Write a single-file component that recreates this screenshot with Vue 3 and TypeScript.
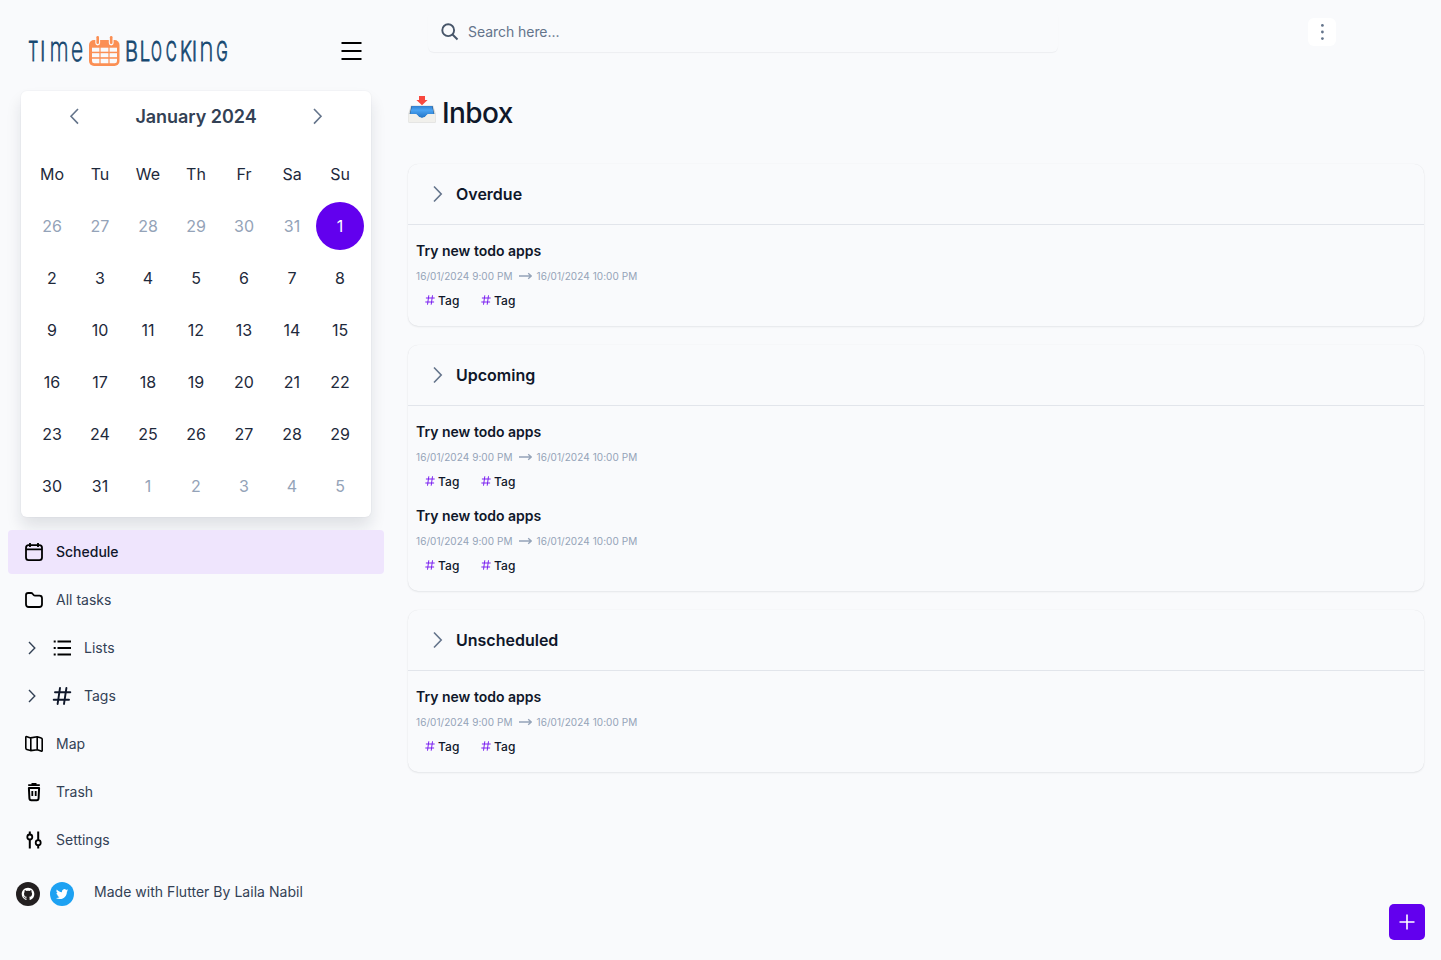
<script setup lang="ts">
interface Letter { c: string; x: number; sx: number; tall?: boolean }
interface Day { n: number; muted: boolean; selected: boolean }
interface Section { title: string; tasks: number }

const timeLetters: Letter[] = [
  { c: 'T', x: 33.3, sx: 0.58 },
  { c: 'I', x: 42.8, sx: 0.7 },
  { c: 'm', x: 59, sx: 0.63, tall: true },
  { c: 'e', x: 77, sx: 0.6, tall: true },
]
const blockingLetters: Letter[] = [
  { c: 'B', x: 131.4, sx: 0.74 },
  { c: 'L', x: 145, sx: 0.68 },
  { c: 'O', x: 156.5, sx: 0.53 },
  { c: 'C', x: 171.2, sx: 0.56 },
  { c: 'K', x: 186, sx: 0.68 },
  { c: 'I', x: 194.5, sx: 0.7 },
  { c: 'n', x: 206.5, sx: 0.7, tall: true },
  { c: 'G', x: 222, sx: 0.57 },
]

const weekdays = ['Mo', 'Tu', 'We', 'Th', 'Fr', 'Sa', 'Su']
const days: Day[] = Array.from({ length: 42 }, (_, i) => {
  if (i < 6) return { n: 26 + i, muted: true, selected: false }
  if (i < 37) return { n: i - 5, muted: false, selected: i === 6 }
  return { n: i - 36, muted: true, selected: false }
})

const sections: Section[] = [
  { title: 'Overdue', tasks: 1 },
  { title: 'Upcoming', tasks: 2 },
  { title: 'Unscheduled', tasks: 1 },
]
const tags = ['Tag', 'Tag']
</script>

<template>
  <div class="app">
    <aside class="sidebar">
      <header class="brand">
        <svg class="logo" width="240" height="80" viewBox="0 0 240 80">
          <g class="word">
            <text
              v-for="(l, i) in timeLetters" :key="'t' + i"
              :class="{ tall: l.tall }"
              :transform="`translate(${l.x} 60.6) scale(${l.sx} 1)`"
            >{{ l.c }}</text>
            <text
              v-for="(l, i) in blockingLetters" :key="'b' + i"
              :class="{ tall: l.tall }"
              :transform="`translate(${l.x} 60.6) scale(${l.sx} 1)`"
            >{{ l.c }}</text>
          </g>
          <rect x="89" y="40" width="30.5" height="26" rx="5" fill="#fb8f54" />
          <g fill="#f9fafc">
            <rect x="95.3" y="37" width="4.8" height="8.4" rx="2.4" />
            <rect x="108.8" y="37" width="4.8" height="8.4" rx="2.4" />
            <rect x="92" y="47.7" width="7.4" height="4" />
            <rect x="100.6" y="47.7" width="7.8" height="4" />
            <rect x="109.6" y="47.7" width="7.4" height="4" />
            <rect x="92" y="53.2" width="7.4" height="4" />
            <rect x="100.6" y="53.2" width="7.8" height="4" />
            <rect x="109.6" y="53.2" width="7.4" height="4" />
            <path d="M92 58.7h7.4v4.6h-5q-2.4 0-2.4-2.4zM100.6 58.7h7.8v4.6h-7.8zM109.6 58.7h7.4v2.2q0 2.4-2.4 2.4h-5z" />
          </g>
          <g fill="#fb8f54">
            <rect x="96.4" y="36" width="2.6" height="8" rx="1.2" />
            <rect x="109.9" y="36" width="2.6" height="8" rx="1.2" />
          </g>
        </svg>
        <svg class="burger" width="22" height="20" viewBox="0 0 22 20">
          <path d="M1.500 2h20M1.500 10h20M1.500 18h20" stroke="#000" stroke-width="2" />
        </svg>
      </header>

      <section class="calendar">
        <div class="month">
          <svg width="10" height="18" viewBox="0 0 10 18"><path d="M9 1 2 8.300l7 7.300" /></svg>
          <h2>January 2024</h2>
          <svg width="10" height="18" viewBox="0 0 10 18"><path d="M1 1l7 7.300-7 7.300" /></svg>
        </div>
        <div class="grid">
          <span v-for="w in weekdays" :key="w" class="cell weekday">{{ w }}</span>
          <span
            v-for="(d, i) in days" :key="i"
            class="cell" :class="{ muted: d.muted, selected: d.selected }"
          >{{ d.n }}</span>
        </div>
      </section>

      <nav class="nav">
        <a class="item active">
          <svg class="icon" viewBox="0 0 20 20"><rect x="2" y="3.200" width="16" height="15" rx="2.600" /><path d="M2 7.300h16M6 1v4M14 1v4" /></svg>
          <span>Schedule</span>
        </a>
        <a class="item">
          <svg class="icon" viewBox="0 0 20 20"><path d="M2 5.200Q2 3 4.200 3H7q1 0 1.600.8l1 1.200q.6.700 1.500.700h4.400Q18 5.700 18 8.200v6Q18 17 15.200 17H4.800Q2 17 2 14.200z" /></svg>
          <span>All tasks</span>
        </a>
        <a class="item nested">
          <svg class="caret" width="8" height="14" viewBox="0 0 8 14"><path d="m1 1 5.800 6L1 13" /></svg>
          <svg class="icon" viewBox="0 0 20 20"><path d="M5.500 3.500H19M5.500 10H19M5.500 16.500H19M1.700 3.500h2M1.700 10h2M1.700 16.500h2" stroke-width="2" /></svg>
          <span>Lists</span>
        </a>
        <a class="item nested">
          <svg class="caret" width="8" height="14" viewBox="0 0 8 14"><path d="m1 1 5.800 6L1 13" /></svg>
          <svg class="icon dark" viewBox="0 0 20 20"><path d="M3 6.200h15.300M1.700 13.800H17M8 2 5.600 18M14.400 2 12 18" stroke-width="1.900" stroke-linecap="round" /></svg>
          <span>Tags</span>
        </a>
        <a class="item">
          <svg class="icon" viewBox="0 0 20 20"><path d="M1.800 3.600q0-1.300 1.200-.9l3.600 1.200 6.600-1.200 4 1.300q1 .3 1 1.300v10.900q0 1.300-1.200.9l-3.600-1.300-6.800.8-3.800-1.100q-1-.3-1-1.400zM6.800 4v12.600M13.200 2.800v13" stroke-width="1.600" stroke-linejoin="round" /></svg>
          <span>Map</span>
        </a>
        <a class="item">
          <svg class="icon" viewBox="0 0 20 20"><path d="M4.200 3.100h11.600M7.500 1.900h5M8.300 9v5M11.700 9v5" /><path d="m4.900 6 .5 10.200q.1 2 1.900 2h5.400q1.800 0 1.900-2L15.100 6z" stroke-width="2" stroke-linejoin="round" /></svg>
          <span>Trash</span>
        </a>
        <a class="item">
          <svg class="icon" viewBox="0 0 20 20"><path d="M5.800 1.500v3M5.800 9.500v9M14.200 1.500v8.700M14.200 15.300v3.200" stroke-width="2" /><circle cx="5.800" cy="7" r="2.500" /><circle cx="14.200" cy="12.700" r="2.500" /></svg>
          <span>Settings</span>
        </a>
      </nav>

      <footer class="credits">
        <svg width="24" height="24" viewBox="0 0 24 24">
          <circle cx="12" cy="12" r="12" fill="#231f20" />
          <path fill="#fff" transform="translate(5.700 5.700) scale(.79)" d="M8 0C3.580 0 0 3.580 0 8c0 3.540 2.290 6.530 5.470 7.590.4.070.55-.17.55-.38v-1.490c-2.010.37-2.530-.49-2.690-.94-.09-.23-.48-.94-.82-1.130-.28-.15-.68-.52-.01-.53.63-.01 1.080.58 1.230.82.720 1.210 1.870.87 2.330.66.070-.52.280-.87.510-1.070-1.780-.2-3.640-.89-3.640-3.950 0-.87.310-1.590.82-2.150-.08-.2-.36-1.020.08-2.120 0 0 .67-.21 2.200.82a7.400 7.400 0 0 1 4 0c1.530-1.040 2.200-.82 2.200-.82.440 1.100.16 1.920.08 2.120.51.560.82 1.270.82 2.150 0 3.070-1.870 3.750-3.650 3.950.29.250.54.730.54 1.480v2.200c0 .21.150.46.550.38A8.010 8.010 0 0 0 16 8c0-4.420-3.580-8-8-8z" />
        </svg>
        <svg width="24" height="24" viewBox="0 0 24 24">
          <circle cx="12" cy="12" r="12" fill="#1da1f2" />
          <path fill="#fff" transform="translate(5.900 6) scale(.51)" d="M23.950 4.570a10 10 0 0 1-2.820.77 4.960 4.960 0 0 0 2.160-2.720c-.95.550-2 .95-3.130 1.180a4.920 4.920 0 0 0-8.380 4.480C7.690 8.090 4.070 6.130 1.640 3.160a4.920 4.920 0 0 0 1.520 6.570 4.900 4.900 0 0 1-2.230-.61v.06a4.920 4.920 0 0 0 3.950 4.830 5 5 0 0 1-2.210.08 4.940 4.940 0 0 0 4.600 3.420A9.870 9.870 0 0 1 0 19.540a13.990 13.990 0 0 0 7.550 2.210c9.050 0 14-7.500 14-13.980 0-.21 0-.42-.02-.63a9.940 9.940 0 0 0 2.460-2.550z" />
        </svg>
        <span>Made with Flutter By Laila Nabil</span>
      </footer>
    </aside>

    <main class="main">
      <div class="topbar">
        <div class="search">
          <svg width="18" height="18" viewBox="0 0 18 18"><circle cx="7.200" cy="7.200" r="5.900" /><path d="m11.500 11.500 5 5" /></svg>
          <span>Search here...</span>
        </div>
        <button class="more" aria-label="More">
          <svg width="4" height="18" viewBox="0 0 4 18"><circle cx="2.400" cy="2.400" r="1.400" /><circle cx="2.400" cy="9" r="1.400" /><circle cx="2.400" cy="15.600" r="1.400" /></svg>
        </button>
      </div>

      <h1 class="title">
        <svg width="28" height="28" viewBox="0 0 28 28">
          <defs>
            <linearGradient id="tray" x1="0" y1="0" x2="0" y2="1">
              <stop offset="0" stop-color="#2f7fd0" /><stop offset=".35" stop-color="#4aa3f3" /><stop offset="1" stop-color="#2273c4" />
            </linearGradient>
          </defs>
          <path d="M2.800 10.500h22.400l2.700 8.500v7.700q0 1-1 1H1.200q-1 0-1-1V19z" fill="#d9dad9" />
          <path d="M3.400 11h21.200l1.700 8H1.700z" fill="#24588d" />
          <path d="M4 11h20l1.800 8h-5q-1.200 0-2 .9Q17 23 14 23t-4.800-3.100q-.8-.9-2-.9h-5z" fill="url(#tray)" />
          <path d="M.5 19h6.700q1.200 0 2 .9Q11 23 14 23t4.800-3.100q.8-.9 2-.9h6.700v7.500q0 .8-.8.8H1.300q-.8 0-.8-.8z" fill="#f1f0ec" />
          <path d="M11 1h6v4h2.600L14 10.300 8.400 5H11z" fill="#f8483f" />
        </svg>
        <span>Inbox</span>
      </h1>

      <div class="sections">
        <section v-for="s in sections" :key="s.title" class="card">
          <header class="card-head">
            <svg width="10" height="18" viewBox="0 0 10 18"><path d="M1 1.500 8.200 9 1 16.500" /></svg>
            <h3>{{ s.title }}</h3>
          </header>
          <div class="tasks">
            <article v-for="t in s.tasks" :key="t" class="task">
              <h4>Try new todo apps</h4>
              <div class="time">
                <span class="from">16/01/2024 9:00 PM</span>
                <svg width="13" height="8" viewBox="0 0 13 8"><path d="M0 4h12M9.200 1.200 12.200 4 9.200 6.800" /></svg>
                <span class="to">16/01/2024 10:00 PM</span>
              </div>
              <div class="tags">
                <span v-for="(tag, i) in tags" :key="i" class="tag">
                  <svg width="10" height="10" viewBox="0 0 10 10"><path d="M.900 3h8.800M.300 7h8.800M3.800.300 2.500 9.700M7.500.300 6.200 9.700" /></svg>
                  <span>{{ tag }}</span>
                </span>
              </div>
            </article>
          </div>
        </section>
      </div>
    </main>

    <button class="fab" aria-label="Add">
      <svg width="16" height="16" viewBox="0 0 16 16"><path d="M8 .500v15M.500 8h15" /></svg>
    </button>
  </div>
</template>

<style>
body { background: #f9fafc; }
</style>

<style scoped>
* { box-sizing: border-box; }
.app {
  display: flex;
  height: 960px;
  overflow: hidden;
  background: #f9fafc;
  font-family: Inter, "Liberation Sans", sans-serif;
  color: #0f172a;
}
h1, h2, h3, h4 { margin: 0; }
svg { display: block; flex: none; }
button { border: 0; padding: 0; display: flex; align-items: center; justify-content: center; }

.sidebar { width: 392px; flex: none; }
.brand { display: flex; height: 91px; }
.burger { margin: 41px 0 0 100px; }
.word text {
  font-size: 27px;
  font-weight: 300;
  text-anchor: middle;
  fill: #164870;
  stroke: #164870;
  stroke-width: .7px;
  vector-effect: non-scaling-stroke;
}
.word .tall { font-size: 35px; font-weight: 200; }

.calendar {
  width: 350px;
  height: 426px;
  margin-left: 21px;
  border-radius: 6px;
  background: #fff;
  box-shadow: 0 0 0 1px rgba(15, 23, 42, .02), 0 10px 16px rgba(15, 23, 42, .11);
}
.month { display: flex; align-items: center; justify-content: space-between; height: 51px; padding: 0 48px; }
.month svg, .card-head svg { fill: none; stroke: #64748b; stroke-width: 1.6; }
.month h2 { font-size: 18px; line-height: 24px; font-weight: 600; color: #334155; letter-spacing: -.04px; }
.grid { display: grid; grid-template-columns: repeat(7, 48px); row-gap: 4px; padding: 8px 0 0 7px; }
.cell { height: 48px; display: flex; align-items: center; justify-content: center; font-size: 16px; color: #1e293b; }
.muted { color: #94a3b8; }
.selected { background: #6200ee; color: #fff; border-radius: 50%; }

.nav { display: flex; flex-direction: column; gap: 4px; padding: 13px 8px 0; }
.item {
  display: flex;
  align-items: center;
  height: 44px;
  padding-left: 16px;
  border-radius: 4px;
  font-size: 14px;
  color: #334155;
}
.item span { margin: -1px 0 1px 12px; }
.item.active { background: #efe5fd; color: #0f172a; font-weight: 500; }
.icon { width: 20px; height: 20px; fill: none; stroke: #000; stroke-width: 1.8; }
.icon.dark { stroke: #0f172a; }
.nested { padding-left: 20px; }
.caret { margin-right: 16px; fill: none; stroke: #334155; stroke-width: 1.4; }

.credits { display: flex; align-items: center; gap: 10px; height: 24px; margin: 20px 0 0 16px; font-size: 14px; color: #334155; }
.credits span { margin: -5px 0 0 10px; letter-spacing: .03px; }

.main { flex: 1; padding: 11px 17px 0 16px; }
.topbar { display: flex; align-items: flex-start; justify-content: space-between; padding: 0 88px 0 20px; }
.search {
  display: flex;
  align-items: center;
  gap: 9px;
  width: 630px;
  height: 41px;
  padding-left: 13px;
  border-radius: 6px;
  box-shadow: 0 1px 1px rgba(15, 23, 42, .05);
  font-size: 14px;
  color: #64748b;
  letter-spacing: -.05px;
}
.search svg { fill: none; stroke: #475569; stroke-width: 1.9; }
.more { width: 28px; height: 28px; margin-top: 7px; border-radius: 6px; background: #fff; }
.more svg { fill: #64748b; }

.title { display: flex; gap: 6px; height: 36px; margin-top: 43px; font-size: 28px; line-height: 37px; font-weight: 450; letter-spacing: -.6px; }

.sections { display: flex; flex-direction: column; gap: 19px; margin-top: 33px; }
.card { border-radius: 10px; box-shadow: 0 0 1px rgba(15, 23, 42, .1), 0 1px 2px rgba(15, 23, 42, .08); }
.card-head { display: flex; align-items: center; gap: 13px; height: 61px; padding-left: 25px; border-bottom: 1px solid #e2e5eb; }
.card-head h3 { font-size: 16px; line-height: 24px; font-weight: 600; }
.tasks { padding: 16px 8px 13px; display: flex; flex-direction: column; gap: 12px; }
.task { height: 72px; }
.task h4 { font-size: 14px; line-height: 20px; font-weight: 600; }
.time { display: flex; align-items: center; height: 14px; margin-top: 8px; font-size: 10px; color: #94a3b8; letter-spacing: .06px; }
.time span { white-space: nowrap; }
.time svg { margin: 0 5px 0 6px; fill: none; stroke: #94a3b8; stroke-width: 1.3; }
.tags { display: flex; gap: 20px; margin-top: 8px; padding-left: 9px; }
.tag { display: flex; align-items: center; gap: 3px; width: 36px; height: 18px; font-size: 12px; font-weight: 500; letter-spacing: .1px; }
.tag svg { fill: none; stroke: #7c22f0; stroke-width: 1; }

.fab { position: absolute; left: 1389px; top: 904px; width: 36px; height: 36px; border-radius: 5px; background: #6200ee; }
.fab svg { stroke: #fff; stroke-width: 1.6; }
</style>
